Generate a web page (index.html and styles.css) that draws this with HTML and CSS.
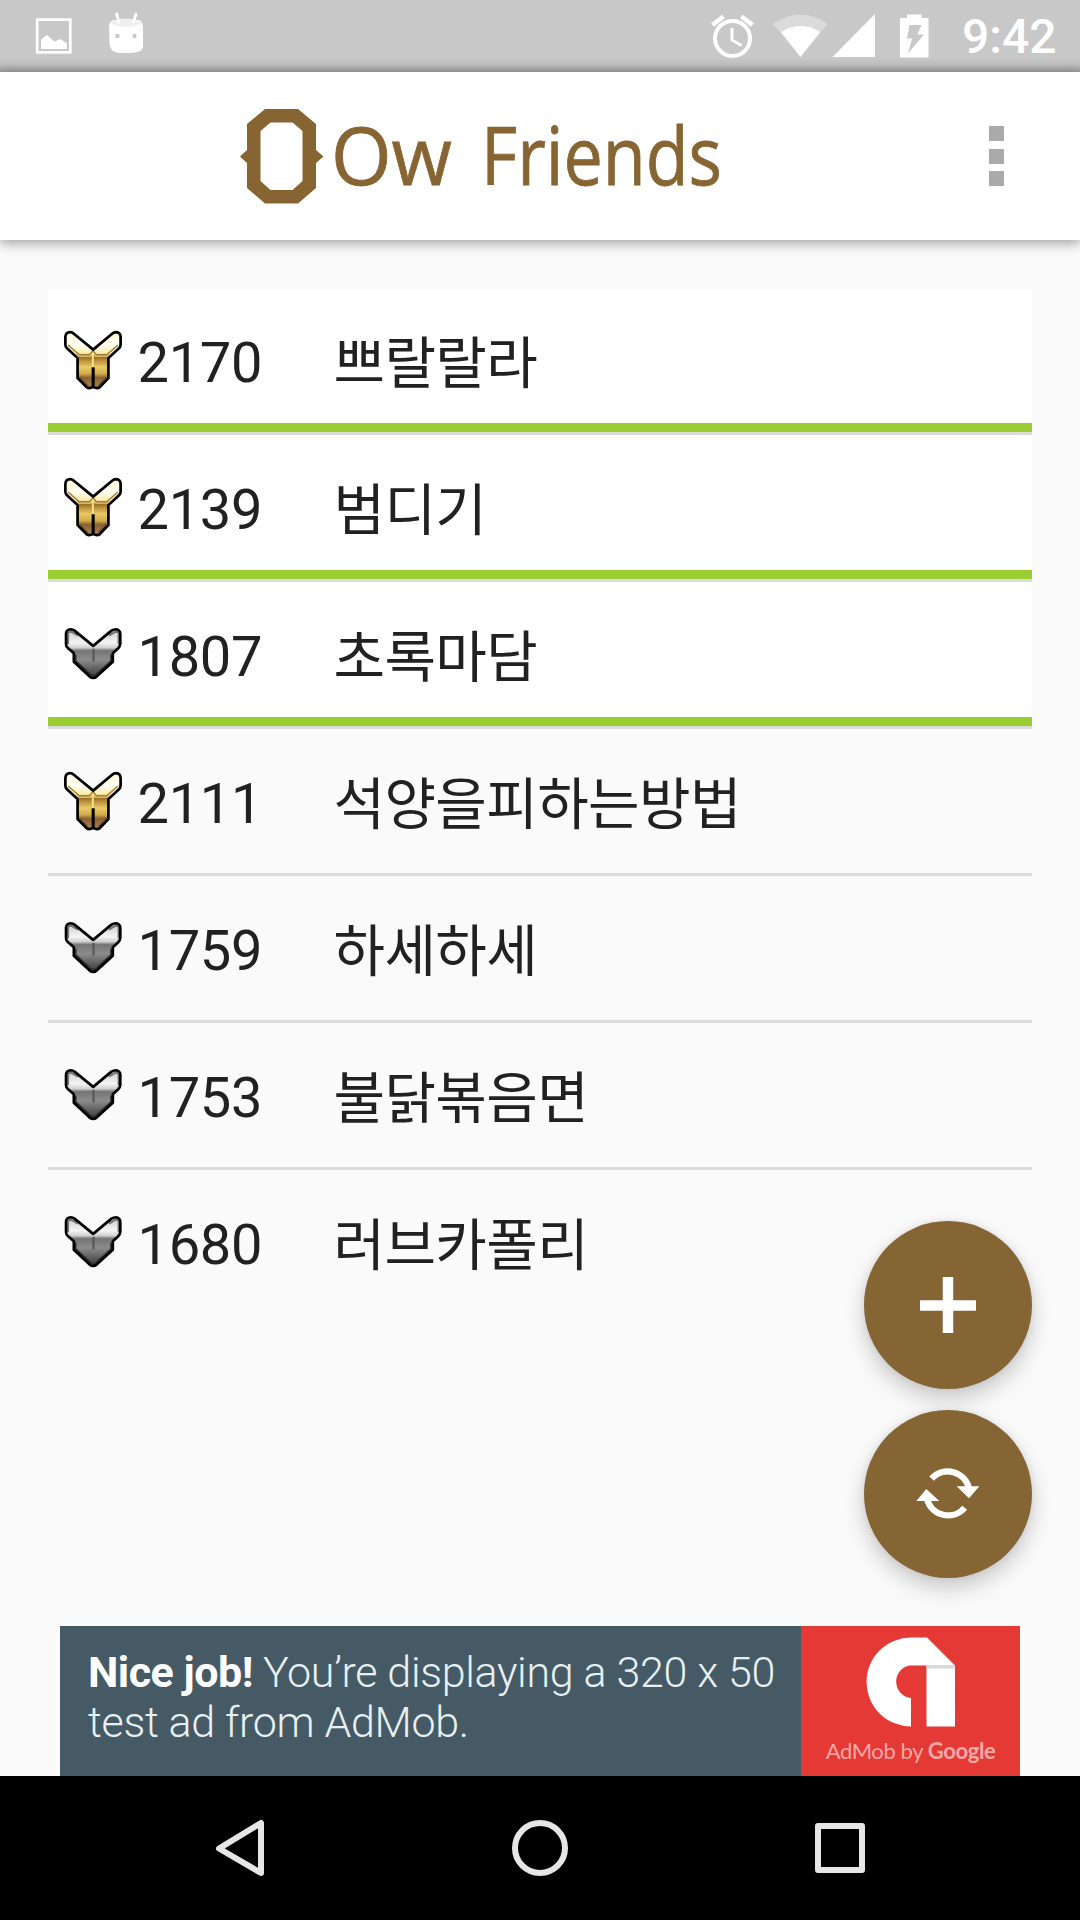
FILE: index.html
```html
<!DOCTYPE html>
<html lang="ko">
<head>
<meta charset="utf-8">
<title>Ow Friends</title>
<link rel="stylesheet" href="styles.css">
</head>
<body>
<svg width="0" height="0" class="defs" aria-hidden="true">
  <defs>
    <linearGradient id="goldWing" gradientUnits="userSpaceOnUse" x1="0" y1="4" x2="0" y2="82">
      <stop offset="0" stop-color="#fff7d2"/><stop offset=".5" stop-color="#fffef4"/><stop offset=".8" stop-color="#fbeeb0"/><stop offset="1" stop-color="#c9a14a"/>
    </linearGradient>
    <linearGradient id="goldBody" gradientUnits="userSpaceOnUse" x1="0" y1="70" x2="0" y2="168">
      <stop offset="0" stop-color="#f4dc7c"/><stop offset=".12" stop-color="#9a7026"/><stop offset=".2" stop-color="#b98f38"/><stop offset=".4" stop-color="#e9c968"/><stop offset=".6" stop-color="#d2ab4c"/><stop offset=".72" stop-color="#8a6233"/><stop offset="1" stop-color="#a8834c"/>
    </linearGradient>
    <linearGradient id="silver" gradientUnits="userSpaceOnUse" x1="0" y1="24" x2="0" y2="172">
      <stop offset="0" stop-color="#c8c8c8"/><stop offset=".28" stop-color="#f4f4f4"/><stop offset=".38" stop-color="#d0d0d0"/><stop offset=".44" stop-color="#747474"/><stop offset=".62" stop-color="#8c8c8c"/><stop offset=".85" stop-color="#555"/><stop offset="1" stop-color="#3c3c3c"/>
    </linearGradient>
    <symbol id="gold" viewBox="0 0 180 180">
      <path d="M7 20Q8 6 21 6Q27 6 32 11L89 58L145 11Q150 6 157 6Q169 7 170 20V43Q170 49 166 53L134 83V142L108 169Q100 174 89 168Q78 174 70 169L43 142V83L11 53Q7 49 7 43Z" fill="url(#goldBody)"/>
      <path d="M7 20Q8 6 21 6Q27 6 32 11L89 58L145 11Q150 6 157 6Q169 7 170 20V43Q170 49 166 53L134 80H96L89 68L82 80H43L11 53Q7 49 7 43Z" fill="url(#goldWing)"/>
      <path d="M15 44L48 73H78L88 62M162 44L129 73H99L89 62" fill="none" stroke="#a47c32" stroke-width="4"/>
      <path d="M88 68V112" stroke="#f5df88" stroke-width="6"/>
      <path d="M49 140L72 164M128 140L105 164" stroke="#74502c" stroke-width="5"/>
      <path d="M89 110V167" stroke="#000" stroke-width="9"/>
      <path d="M7 20Q8 6 21 6Q27 6 32 11L89 58L145 11Q150 6 157 6Q169 7 170 20V43Q170 49 166 53L134 83V142L108 169Q100 174 89 168Q78 174 70 169L43 142V83L11 53Q7 49 7 43Z" fill="none" stroke="#000" stroke-width="8" stroke-linejoin="round"/>
    </symbol>
    <symbol id="silverMedal" viewBox="0 10.500 180 180">
      <path d="M9 38Q10 27 23 26Q29 26 34 30L89 75L143 30Q149 26 156 26Q168 27 169 39V70Q168 77 163 82L147 97V122L100 165Q89 174 78 165L32 122V97L15 82Q9 77 9 70Z" fill="url(#silver)"/>
      <path d="M15 70V38Q16 33 24 33L44 45M164 70V38Q163 33 155 33L136 45" fill="none" stroke="#777" stroke-width="6"/>
      <path d="M37 101V120L82 160Q89 165 97 160L142 120V101" fill="none" stroke="#333" stroke-width="6"/>
      <path d="M90 84V121" stroke="#555" stroke-width="6"/>
      <path d="M9 38Q10 27 23 26Q29 26 34 30L89 75L143 30Q149 26 156 26Q168 27 169 39V70Q168 77 163 82L147 97V122L100 165Q89 174 78 165L32 122V97L15 82Q9 77 9 70Z" fill="none" stroke="#000" stroke-width="8" stroke-linejoin="round"/>
    </symbol>
  </defs>
</svg>
<div class="screen">
  <header class="status">
    <svg class="status-left" viewBox="0 0 360 72" width="360" height="72" fill="#fff">
      <path d="M37.200 19.700H70.300V52.300H37.200Z" fill="none" stroke="#fff" stroke-width="2.700"/>
      <path d="M41 49V39.500L47 35L54.500 41.500L60 39L67 43.500V49Z"/>
      <path d="M109 27Q109 21 114 20H138Q143 21 143 27V46Q143 51 135 52.500Q126 53.500 117 52.500Q110 51 109.500 44Z"/>
      <path d="M110 23Q117 27 126 27T142 23Q135 18.500 126 18.500T110 23Z" fill="#efefef"/>
      <path d="M116.500 14L119 22M136 14L133.500 22" stroke="#fff" stroke-width="2.800" stroke-linecap="round"/>
      <circle cx="117.500" cy="36" r="2.200" fill="#c8c8c8"/><circle cx="134.500" cy="36" r="2.200" fill="#c8c8c8"/>
    </svg>
    <svg class="status-right" viewBox="0 0 250 72" width="250" height="72" fill="#fff">
      <circle cx="22.500" cy="38.500" r="17.500" fill="none" stroke="#fff" stroke-width="4"/>
      <path d="M2.500 25L13.500 16.500M42.500 25L31.500 16.500" stroke="#fff" stroke-width="4.500"/>
      <path d="M22 28V40L31.500 45.500" fill="none" stroke="#fff" stroke-width="3"/>
      <path d="M63 24Q76 14.500 90.500 14.500T117.500 24L90.500 57Z" opacity=".35"/>
      <path d="M71 32Q80 26 90.500 26T110 32L90.500 57Z"/>
      <path d="M122.500 57H165V14Z"/>
      <path d="M190 18H197V14.500H211.500V18H218.500V57.500H190Z"/>
      <path d="M199.500 25H211.500L207.500 34.500H214L198 53.500L202 38.500H197Z" fill="#c8c8c8"/>
    </svg>
    <span class="clock">9:42</span>
  </header>
  <div class="toolbar">
    <svg class="logo" viewBox="0 0 520 168" width="520" height="168">
      <path fill="#876532" fill-rule="evenodd" d="M45 37H78L96 52V78L103.500 84.500L96 91V116L78 131.500H45L27 116V91L20 84.500L27 78V52ZM50.500 50.500L40.500 59V109L50.500 118H72.500L82.500 109V59L72.500 50.500Z"/>
      <text class="logo-text" x="111" y="113" textLength="121" lengthAdjust="spacingAndGlyphs">Ow</text>
      <text class="logo-text" x="261" y="113" textLength="241" lengthAdjust="spacingAndGlyphs">Friends</text>
    </svg>
    <div class="more"><i></i><i></i><i></i></div>
  </div>
  <main class="content">
    <ul class="friends">
      <li class="friend online"><svg class="medal"><use href="#gold"/></svg><span class="score">2170</span><span class="name">쁘랄랄라</span></li>
      <li class="friend online"><svg class="medal"><use href="#gold"/></svg><span class="score">2139</span><span class="name">범디기</span></li>
      <li class="friend online"><svg class="medal"><use href="#silverMedal"/></svg><span class="score">1807</span><span class="name">초록마담</span></li>
      <li class="friend"><svg class="medal"><use href="#gold"/></svg><span class="score">2111</span><span class="name">석양을피하는방법</span></li>
      <li class="friend"><svg class="medal"><use href="#silverMedal"/></svg><span class="score">1759</span><span class="name">하세하세</span></li>
      <li class="friend"><svg class="medal"><use href="#silverMedal"/></svg><span class="score">1753</span><span class="name">불닭볶음면</span></li>
      <li class="friend"><svg class="medal"><use href="#silverMedal"/></svg><span class="score">1680</span><span class="name">러브카폴리</span></li>
    </ul>
    <div class="fabs">
      <button class="fab" aria-label="add"><svg viewBox="0 0 168 168"><path d="M84 56V112M56 84.500H112" stroke="#fff" stroke-width="10.500"/></svg></button>
      <button class="fab" aria-label="refresh"><svg viewBox="0 0 504 504"><g fill="none" stroke="#fff" stroke-width="19"><path d="M203 206A65 65 0 0 1 315 236"/><path d="M302 293A65 65 0 0 1 189 266"/></g><path fill="#fff" d="M278 229H346L315 265ZM157 273H226L187 237Z"/></svg></button>
    </div>
  </main>
  <aside class="ad">
    <p class="ad-copy"><b>Nice job!</b> You’re displaying a 320 x 50<br>test ad from AdMob.</p>
    <div class="ad-brand">
      <svg viewBox="0 0 89 90" width="89" height="90" fill="#fff">
        <path d="M45 89.500A44.500 44.500 0 0 1 45 .5H61L89 28.500H43A16.500 16.500 0 0 0 45 61Z"/>
        <path d="M60.500 28.500H89V89.500H60.500Z"/>
        <path d="M60.500 28.500H88L89 31.500H60.500Z" fill="#d9d9d9"/>
      </svg>
      <span class="ad-by">AdMob by <b>Google</b></span>
    </div>
  </aside>
  <nav class="nav">
    <svg viewBox="0 0 1080 144" width="1080" height="144" fill="none" stroke="#e6e6e6" stroke-width="6" stroke-linejoin="round">
      <path d="M219 72.500L261 47V97Z"/>
      <circle cx="540" cy="72" r="25"/>
      <path d="M818 50H862V94H818Z"/>
    </svg>
  </nav>
</div>
</body>
</html>
```
FILE: styles.css
```css
* { box-sizing: border-box; }
body { margin: 0; background: #fafafa; font-family: Roboto, "Noto Sans CJK KR", sans-serif; }
.defs { position: absolute; }
.screen { width: 1080px; height: 1920px; display: flex; flex-direction: column; overflow: hidden; }

.status { height: 72px; flex: none; display: flex; background: linear-gradient(#c8c8c8 58px, #c0c0c0 64px, #a0a0a0 72px); }
.status-right { margin-left: auto; margin-right: 32px; }
.clock { width: 118px; margin-left: -30px; font-size: 48px; font-weight: 500; line-height: 74px; color: #fff; white-space: nowrap; }

.toolbar { height: 168px; flex: none; display: flex; justify-content: space-between; padding: 0 76px 0 220px; background: #fff; box-shadow: 0 3px 12px rgba(0,0,0,.38); z-index: 1; }
.logo { overflow: visible; }
.logo-text { font-family: "Open Sans", sans-serif; font-size: 80px; fill: #876532; stroke: #876532; stroke-width: .8px; }
.more { display: flex; flex-direction: column; gap: 7.500px; padding-top: 54px; }
.more i { width: 15px; height: 15px; background: #aaa; }

.content { position: relative; flex: 1; padding: 48px 48px 0; }
.friends { margin: 0; padding: 0; list-style: none; }
.friend { height: 147px; display: grid; grid-template-columns: 75px 196px 1fr; padding: 0 0 0 14.500px; border-bottom: 3px solid #dbdbdb; font-size: 56px; color: #212121; white-space: nowrap; }
.friend:last-child { border-bottom-color: transparent; }
.online { background: linear-gradient(#fff 135px, #9acd32 135px); }
.online:first-child { background: linear-gradient(#fafafa 1px, #fff 1px, #fff 135px, #9acd32 135px); }
.medal { width: 61px; height: 61px; margin-top: 42px; }
.score { line-height: 151px; letter-spacing: -.3px; }
.name { font-family: "Noto Sans CJK KR", sans-serif; line-height: 141px; letter-spacing: -.6px; }

.fabs { position: absolute; right: 48px; top: 981px; display: grid; gap: 21px; }
.fab { width: 168px; height: 168px; padding: 0; border: 0; border-radius: 50%; background: #856534; box-shadow: 0 10px 22px rgba(0,0,0,.2), 0 0 6px rgba(0,0,0,.08); }
.fab svg { display: block; width: 168px; height: 168px; }

.ad { width: 960px; height: 150px; flex: none; margin: 0 auto; display: flex; background: #455a64; color: #e6f0f5; }
.ad-copy { width: 741px; margin: 0; padding: 22px 0 0 28px; font-size: 43px; line-height: 49.500px; font-weight: 300; letter-spacing: -.32px; white-space: nowrap; }
.ad-copy b { font-weight: 700; color: #fff; letter-spacing: -.5px; }
.ad-brand { flex: 1; display: flex; flex-direction: column; align-items: center; padding-top: 11px; background: #e53935; }
.ad-by { font-family: Lato, sans-serif; font-size: 22px; line-height: 30px; margin-top: 9px; letter-spacing: -.4px; color: #f8a8a5; white-space: nowrap; }
.nav { height: 144px; flex: none; background: #000; }
```
